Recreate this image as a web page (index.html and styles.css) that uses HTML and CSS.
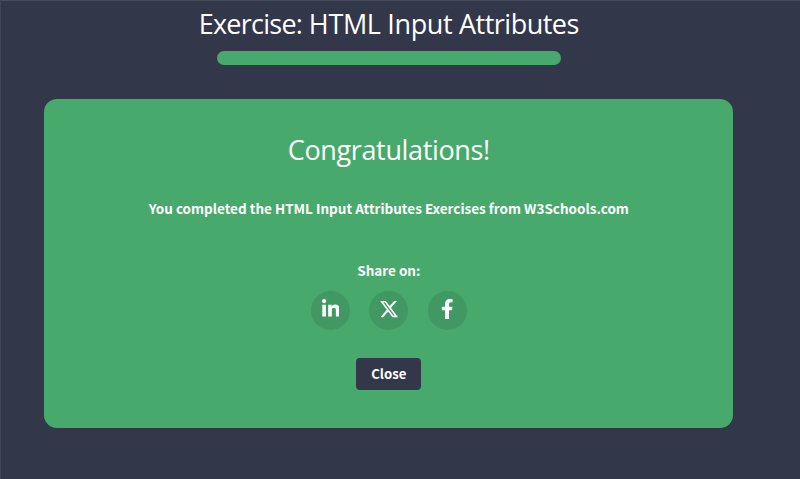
FILE: index.html
```html
<!DOCTYPE html>
<html lang="en">
<head>
<meta charset="utf-8">
<title>Exercise: HTML Input Attributes</title>
<link rel="stylesheet" href="styles.css">
</head>
<body>
<main class="page">
  <h1 class="title"><span class="tight">Exercise:</span> HTML Input <span class="snug">Attributes</span></h1>
  <div class="progress"></div>
  <section class="card">
    <h2 class="heading">Congratulations!</h2>
    <p class="message">You completed the HTML Input Attributes Exercises from W3Schools.com</p>
    <p class="share-label">Share on:</p>
    <div class="share">
      <a class="share-link" aria-label="LinkedIn"><svg width="17.5" height="20" viewBox="0 0 448 512"><path d="M100.28 448H7.4V148.9h92.88zM53.79 108.1C24.09 108.1 0 83.5 0 53.8a53.79 53.79 0 0 1 107.58 0c0 29.7-24.1 54.3-53.79 54.3zM447.9 448h-92.68V302.4c0-34.7-.7-79.2-48.29-79.2-48.29 0-55.69 37.7-55.69 76.7V448h-92.78V148.9h89.08v40.8h1.3c12.4-23.5 42.69-48.3 87.88-48.3 94 0 111.28 61.9 111.28 142.3V448z"/></svg></a>
      <a class="share-link" aria-label="X"><svg width="20" height="20" viewBox="0 0 512 512"><path d="M389.2 48h70.6L305.6 224.2 487 464H345L233.7 318.6 106.5 464H35.8L200.7 275.5 26.8 48H172.4L272.9 180.9 389.2 48zM364.4 421.8h39.1L151.1 88h-42L364.4 421.8z"/></svg></a>
      <a class="share-link" aria-label="Facebook"><svg width="12.5" height="20" viewBox="0 0 320 512"><path d="M279.14 288l14.22-92.66h-88.91v-60.13c0-25.35 12.42-50.06 52.24-50.06h40.42V6.26S260.43 0 225.36 0c-73.22 0-121.08 44.38-121.08 124.72v70.62H22.89V288h81.39v224h100.17V288z"/></svg></a>
    </div>
    <button class="close">Close</button>
  </section>
</main>
</body>
</html>
```
FILE: styles.css
```css
* {
  box-sizing: border-box;
}

body {
  margin: 0;
  background: #32374a;
  color: #fff;
  font-family: "Noto Sans CJK SC", sans-serif;
}

.page {
  display: flex;
  flex-direction: column;
  align-items: center;
  height: 479px;
  padding-right: 23.4px;
  border-top: 1px solid #484d5d;
  border-left: 1px solid #404557;
}

.title,
.heading {
  margin: 0;
  font-family: "Open Sans", sans-serif;
  font-weight: 400;
  font-size: 27px;
  line-height: 40px;
  letter-spacing: -0.35px;
  white-space: nowrap;
}

.title {
  margin-top: 3px;
}

.tight {
  letter-spacing: -0.75px;
}

.snug {
  letter-spacing: -0.5px;
}

.progress {
  width: 344px;
  height: 14px;
  margin-top: 7px;
  border-radius: 7px;
  background: #48a96c;
}

.card {
  display: flex;
  flex-direction: column;
  align-items: center;
  width: 689px;
  height: 329px;
  margin-top: 34.4px;
  padding-top: 30.6px;
  border-radius: 13px;
  background: #48a96c;
}

.message,
.share-label {
  margin: 0;
  font-size: 13.5px;
  font-weight: 700;
  line-height: 20px;
  white-space: nowrap;
}

.message {
  margin-top: 28px;
}

.share-label {
  margin-top: 42px;
}

.share {
  display: flex;
  gap: 19.5px;
  margin-top: 11px;
}

.share-link {
  display: flex;
  align-items: center;
  justify-content: center;
  width: 39px;
  height: 39px;
  padding-bottom: 3px;
  border-radius: 50%;
  background: #419862;
}

.share-link svg {
  fill: #fff;
}

.close {
  width: 65px;
  height: 32px;
  margin-top: 28px;
  padding: 0;
  border: 0;
  border-radius: 4px;
  background: #32374a;
  color: #fff;
  font-family: inherit;
  font-size: 13.2px;
  font-weight: 700;
}
```
